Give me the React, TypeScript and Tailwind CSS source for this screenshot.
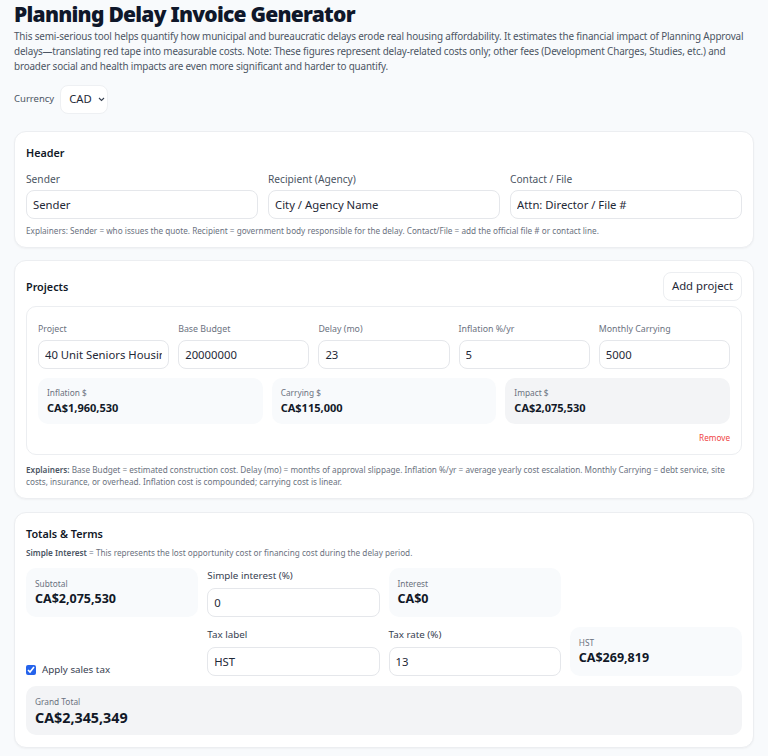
import React, { useState } from 'react';

const inputCls =
  'w-full h-[29px] rounded-[8px] border border-[#e5e7eb] bg-white px-[6px] text-[11.3px] text-[#1f2937] outline-none';

const Field: React.FC<{ label: string; value: string; small?: boolean }> = ({ label, value, small }) => (
  <div className="flex flex-col gap-[4px] min-w-0">
    <label className={small ? 'text-[8.8px] leading-[14px] text-[#6b7280]' : 'text-[10.2px] leading-[14px] text-[#4b5563]'}>
      {label}
    </label>
    <input className={inputCls} defaultValue={value} />
  </div>
);

const Stat: React.FC<{ label: string; value: string; dark?: boolean; big?: boolean }> = ({ label, value, dark, big }) => (
  <div className={`rounded-[10px] px-[9px] flex flex-col justify-center ${dark ? 'bg-[#f3f4f6]' : 'bg-[#f8fafc]'} ${big ? 'h-[49px]' : 'h-[46px]'}`}>
    <div className="text-[8.3px] leading-[13px] text-[#6b7280]">{label}</div>
    <div className={`${big ? 'text-[12.5px]' : 'text-[11px]'} leading-[18px] font-bold text-[#111827]`}>{value}</div>
  </div>
);

export default function App() {
  const [tax, setTax] = useState(true);
  return (
    <div className="min-h-screen bg-[#f8fafc] px-[14px] pt-0 pb-[10px]" style={{ fontFamily: '"Noto Sans", "Open Sans", sans-serif' }}>
      <h1 className="text-[21px] leading-[28px] font-black text-[#0f172a] tracking-[-0.75px]">Planning Delay Invoice Generator</h1>
      <p className="mt-[1px] text-[9.9px] leading-[15px] tracking-[-0.15px] text-[#4b5563]">
        This semi-serious tool helps quantify how municipal and bureaucratic delays erode real housing affordability. It estimates the financial impact of Planning Approval delays—translating red tape into measurable costs. Note: These figures represent delay-related costs only; other fees (Development Charges, Studies, etc.) and broader social and health impacts are even more significant and harder to quantify.
      </p>

      <div className="mt-[11px] flex items-center gap-[6px]">
        <span className="text-[9.5px] text-[#4b5563]">Currency</span>
        <div className="h-[29px] w-[48px] rounded-[8px] border border-[#eef0f3] bg-white flex items-center pl-[8px] gap-[6px]">
          <span className="text-[11.3px] text-[#1f2937]">CAD</span>
          <svg width="7" height="5" viewBox="0 0 7 5" fill="none"><path d="M1 1l2.5 2.5L6 1" stroke="#374151" strokeWidth="1.1" /></svg>
        </div>
      </div>

      {/* Header */}
      <section className="mt-[17px] rounded-[12px] border border-[#eceef1] bg-white px-[11px] pt-[12px] pb-[10px] shadow-[0_1px_2px_rgba(0,0,0,0.04)]">
        <h2 className="text-[10.8px] leading-[18px] font-semibold text-[#111827]">Header</h2>
        <div className="mt-[10px] grid grid-cols-3 gap-[10px]">
          <Field label="Sender" value="Sender" />
          <Field label="Recipient (Agency)" value="City / Agency Name" />
          <Field label="Contact / File" value="Attn: Director / File #" />
        </div>
        <p className="mt-[6px] text-[8.2px] leading-[12px] text-[#6b7280]">
          Explainers: Sender = who issues the quote. Recipient = government body responsible for the delay. Contact/File = add the official file # or contact line.
        </p>
      </section>

      {/* Projects */}
      <section className="mt-[12px] rounded-[12px] border border-[#eceef1] bg-white px-[11px] pt-[11px] pb-[10px] shadow-[0_1px_2px_rgba(0,0,0,0.04)]">
        <div className="flex items-center justify-between">
          <h2 className="text-[10.8px] leading-[18px] font-semibold text-[#111827]">Projects</h2>
          <button className="h-[29px] rounded-[8px] border border-[#eceef1] bg-white px-[8px] text-[11.3px] text-[#1f2937]">Add project</button>
        </div>
        <div className="mt-[5px] rounded-[10px] border border-[#eceef1] px-[11px] pt-[15px] pb-[10px]">
          <div className="grid grid-cols-5 gap-[9px]">
            <Field small label="Project" value="40 Unit Seniors Housing" />
            <Field small label="Base Budget" value="20000000" />
            <Field small label="Delay (mo)" value="23" />
            <Field small label="Inflation %/yr" value="5" />
            <Field small label="Monthly Carrying" value="5000" />
          </div>
          <div className="mt-[9px] grid grid-cols-3 gap-[9px]">
            <Stat label="Inflation $" value="CA$1,960,530" />
            <Stat label="Carrying $" value="CA$115,000" />
            <Stat dark label="Impact $" value="CA$2,075,530" />
          </div>
          <div className="mt-[8px] text-right text-[8.2px] leading-[12px] text-[#ef4444]">Remove</div>
        </div>
        <p className="mt-[9px] text-[8.2px] leading-[12px] text-[#6b7280]">
          <b className="font-semibold text-[#4b5563]">Explainers:</b> Base Budget = estimated construction cost. Delay (mo) = months of approval slippage. Inflation %/yr = average yearly cost escalation. Monthly Carrying = debt service, site costs, insurance, or overhead. Inflation cost is compounded; carrying cost is linear.
        </p>
      </section>

      {/* Totals */}
      <section className="mt-[13px] rounded-[12px] border border-[#eceef1] bg-white px-[11px] pt-[12px] pb-[12px] shadow-[0_1px_2px_rgba(0,0,0,0.04)]">
        <h2 className="text-[10.8px] leading-[18px] font-semibold text-[#111827]">Totals &amp; Terms</h2>
        <p className="mt-[4px] text-[8.2px] leading-[12px] text-[#6b7280]">
          <b className="font-semibold text-[#4b5563]">Simple Interest</b> = This represents the lost opportunity cost or financing cost during the delay period.
        </p>
        <div className="mt-[9px] grid grid-cols-4 gap-x-[9px] gap-y-[10px]">
          <Stat big label="Subtotal" value="CA$2,075,530" />
          <div className="flex flex-col gap-[4px]">
            <label className="text-[9.8px] leading-[16px] text-[#374151]">Simple interest (%)</label>
            <input className={inputCls} defaultValue="0" />
          </div>
          <Stat big label="Interest" value="CA$0" />
          <div />
          <label className="flex items-end gap-[6px] text-[9.8px] leading-[12px] text-[#374151]">
            <input type="checkbox" checked={tax} onChange={e => setTax(e.target.checked)} className="h-[10px] w-[10px] mb-[1px] accent-[#2563eb]" />
            Apply sales tax
          </label>
          <div className="flex flex-col gap-[4px]">
            <label className="text-[9.8px] leading-[16px] text-[#374151]">Tax label</label>
            <input className={inputCls} defaultValue="HST" />
          </div>
          <div className="flex flex-col gap-[4px]">
            <label className="text-[9.8px] leading-[16px] text-[#374151]">Tax rate (%)</label>
            <input className={inputCls} defaultValue="13" />
          </div>
          <div className="self-end">
            <Stat big label="HST" value="CA$269,819" />
          </div>
          <div className="col-span-4">
            <div className="h-[49px] rounded-[10px] bg-[#f3f4f6] px-[9px] flex flex-col justify-center">
              <div className="text-[8.3px] leading-[13px] text-[#6b7280]">Grand Total</div>
              <div className="text-[14.3px] leading-[19px] font-bold text-[#111827]">CA$2,345,349</div>
            </div>
          </div>
        </div>
      </section>
    </div>
  );
}
